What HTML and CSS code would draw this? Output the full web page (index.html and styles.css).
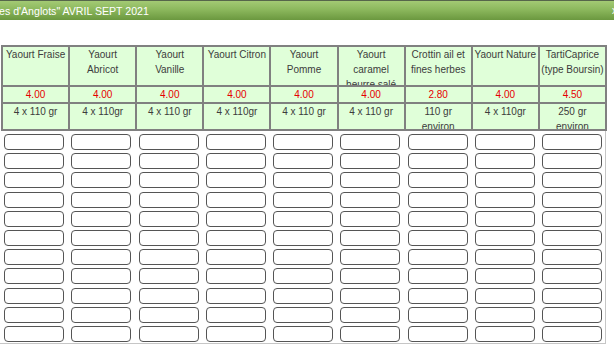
FILE: index.html
```html
<!DOCTYPE html>
<html lang="fr">
<head>
    <meta charset="UTF-8">
    <meta name="viewport" content="width=device-width, initial-scale=1.0">
    <title>Commande AVRIL SEPT 2021</title>
    <link rel="stylesheet" href="styles.css">
</head>
<body>
    <div class="dialog">
        <div class="titlebar">
            <span class="title">es d'Anglots" AVRIL SEPT 2021</span>
            <span class="close">x</span>
        </div>

        <div class="content">
            <table class="products">
                <tr class="names">
                    <td><div>Yaourt Fraise</div></td>
                    <td><div>Yaourt<br>Abricot</div></td>
                    <td><div>Yaourt<br>Vanille</div></td>
                    <td><div>Yaourt Citron</div></td>
                    <td><div>Yaourt<br>Pomme</div></td>
                    <td><div>Yaourt<br>caramel<br>beurre salé</div></td>
                    <td><div>Crottin ail et<br>fines herbes</div></td>
                    <td><div>Yaourt Nature</div></td>
                    <td><div>TartiCaprice<br>(type Boursin)</div></td>
                </tr>
                <tr class="prices">
                    <td><div>4.00</div></td>
                    <td><div>4.00</div></td>
                    <td><div>4.00</div></td>
                    <td><div>4.00</div></td>
                    <td><div>4.00</div></td>
                    <td><div>4.00</div></td>
                    <td><div>2.80</div></td>
                    <td><div>4.00</div></td>
                    <td><div>4.50</div></td>
                </tr>
                <tr class="weights">
                    <td><div>4 x 110 gr</div></td>
                    <td><div>4 x 110gr</div></td>
                    <td><div>4 x 110 gr</div></td>
                    <td><div>4 x 110gr</div></td>
                    <td><div>4 x 110 gr</div></td>
                    <td><div>4 x 110 gr</div></td>
                    <td><div>110 gr<br>environ</div></td>
                    <td><div>4 x 110gr</div></td>
                    <td><div>250 gr<br>environ</div></td>
                </tr>
            </table>

            <!-- one line of quantities per customer -->
            <div class="entries">
                <input type="text"><input type="text"><input type="text"><input type="text"><input type="text"><input type="text"><input type="text"><input type="text"><input type="text">
                <input type="text"><input type="text"><input type="text"><input type="text"><input type="text"><input type="text"><input type="text"><input type="text"><input type="text">
                <input type="text"><input type="text"><input type="text"><input type="text"><input type="text"><input type="text"><input type="text"><input type="text"><input type="text">
                <input type="text"><input type="text"><input type="text"><input type="text"><input type="text"><input type="text"><input type="text"><input type="text"><input type="text">
                <input type="text"><input type="text"><input type="text"><input type="text"><input type="text"><input type="text"><input type="text"><input type="text"><input type="text">
                <input type="text"><input type="text"><input type="text"><input type="text"><input type="text"><input type="text"><input type="text"><input type="text"><input type="text">
                <input type="text"><input type="text"><input type="text"><input type="text"><input type="text"><input type="text"><input type="text"><input type="text"><input type="text">
                <input type="text"><input type="text"><input type="text"><input type="text"><input type="text"><input type="text"><input type="text"><input type="text"><input type="text">
                <input type="text"><input type="text"><input type="text"><input type="text"><input type="text"><input type="text"><input type="text"><input type="text"><input type="text">
                <input type="text"><input type="text"><input type="text"><input type="text"><input type="text"><input type="text"><input type="text"><input type="text"><input type="text">
                <input type="text"><input type="text"><input type="text"><input type="text"><input type="text"><input type="text"><input type="text"><input type="text"><input type="text">
            </div>
        </div>
    </div>
</body>
</html>
```

FILE: styles.css
```css
body, html {
    margin: 0;
    padding: 0;
    background-color: #ffffff;
    font-family: 'Liberation Sans', Arial, sans-serif;
    overflow: hidden;
}

.dialog {
    width: 614px;
    height: 362px;
    overflow: hidden;
}

/* Green title bar of the order window */
.titlebar {
    height: 19px;
    border-top: 1px solid #56664a;
    background: linear-gradient(#a3ca74, #8cb85d 45%, #6b983f);
    color: #ffffff;
    font-size: 10.6px;
    display: flex;
    align-items: center;
    justify-content: space-between;
    white-space: nowrap;
}

.title {
    margin-left: -1px;
}

.close {
    margin-right: -3px;
    font-size: 10px;
}

.content {
    padding-top: 25px;
}

/* Product table: names, prices, weights */
.products {
    margin-left: 1px;
    width: 606px;
    table-layout: fixed;
    border-collapse: separate;
    border-spacing: 0;
    border: 1px solid #808080;
}

.products td {
    padding: 0;
    border: 1px solid #808080;
    background-color: #e0ffd9;
    color: #3c3c3c;
    font-size: 10px;
    line-height: 15px;
    text-align: center;
    vertical-align: top;
    white-space: nowrap;
}

.products td div {
    overflow: hidden;
}

.names div {
    height: 38px;
}

.prices div {
    height: 15px;
    color: #e60000;
}

.weights div {
    height: 25px;
}

/* Quantity inputs under each product */
.entries {
    box-sizing: border-box;
    width: 606px;
    padding: 3px 0 1px 4px;
    border-right: 1px solid #c6c6c6;
    border-bottom: 1px solid #c6c6c6;
    display: grid;
    grid-template-columns: repeat(9, 60px);
    column-gap: 7.25px;
    row-gap: 3.2px;
}

.entries input {
    box-sizing: border-box;
    width: 60px;
    height: 16px;
    margin: 0;
    padding: 0 3px;
    border: 1px solid #555555;
    border-radius: 4px;
    background-color: #ffffff;
    font-size: 10px;
}
```
